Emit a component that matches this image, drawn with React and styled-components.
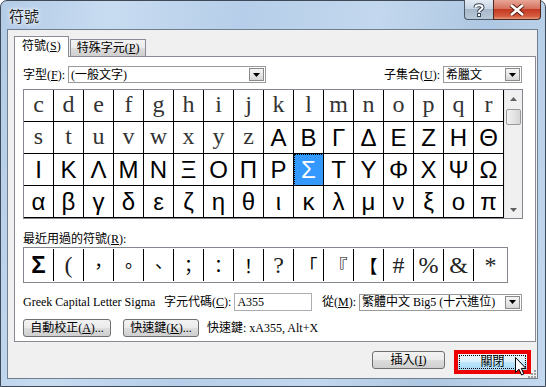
import React from "react";
import styled, { createGlobalStyle } from "styled-components";

const GlobalStyle = createGlobalStyle`
   html, body {
      margin: 0;
      padding: 0;
      background: #ffffff;
   }
   * {
      box-sizing: border-box;
   }
`;

const UI_FONT = `"Liberation Serif", "Noto Sans CJK TC", serif`;

const gridRows = [
   { chars: "cdefghijklmnopqr", font: "serif" },
   { chars: "stuvwxyz", font: "serif", rest: "ΑΒΓΔΕΖΗΘ" },
   { chars: "ΙΚΛΜΝΞΟΠΡΣΤΥΦΧΨΩ", font: "sans" },
   { chars: "αβγδεζηθικλμνξοπ", font: "sans" },
];

const recent = [
   { c: "Σ", font: "sans" },
   { c: "(", font: "serif" },
   { c: "，", font: "cjk" },
   { c: "。", font: "cjk" },
   { c: "、", font: "cjk" },
   { c: "；", font: "cjk" },
   { c: "：", font: "cjk" },
   { c: "！", font: "cjk" },
   { c: "?", font: "serif" },
   { c: "「", font: "cjk" },
   { c: "『", font: "cjk" },
   { c: "【", font: "cjk" },
   { c: "#", font: "serif" },
   { c: "%", font: "serif" },
   { c: "&", font: "serif" },
   { c: "*", font: "serif" },
];

const fontFor = (f) =>
   f === "serif"
      ? `"Liberation Serif", "DejaVu Serif", serif`
      : f === "cjk"
      ? `"Noto Sans CJK TC", sans-serif`
      : `"Liberation Sans", Arial, sans-serif`;

function ComboArrow() {
   return (
      <ArrowBox>
         <svg width="7" height="4" viewBox="0 0 7 4">
            <path d="M0 0 H7 L3.5 4 Z" fill="#000" />
         </svg>
      </ArrowBox>
   );
}

function Select({ width, children }) {
   return (
      <SelectBox $width={width}>
         <SelectText>{children}</SelectText>
         <ComboArrow />
      </SelectBox>
   );
}

function App() {
   const cells = [];
   gridRows.forEach((row, r) => {
      const all = row.chars + (row.rest || "");
      [...all].forEach((ch, i) => {
         const font = i < row.chars.length ? row.font : "sans";
         cells.push(
            <Cell
               key={`${r}-${i}`}
               $font={font}
               $selected={r === 2 && i === 9}
               $lastCol={i === 15}
            >
               {ch}
            </Cell>
         );
      });
   });

   return (
      <>
         <GlobalStyle />
         <Window>
            <TitleBar>
               <Title>符號</Title>
               <CaptionButtons>
                  <HelpButton>
                     <svg width="12" height="14" viewBox="0 0 12 14">
                        <path
                           d="M2.5 4.5 C2.5 1.5 9.5 1.5 9.5 4.5 C9.5 6.5 6 6.5 6 9"
                           fill="none"
                           stroke="#3a4656"
                           strokeWidth="4"
                        />
                        <path
                           d="M2.5 4.5 C2.5 1.5 9.5 1.5 9.5 4.5 C9.5 6.5 6 6.5 6 9"
                           fill="none"
                           stroke="#fff"
                           strokeWidth="2"
                        />
                        <rect x="4.5" y="10.5" width="3" height="3" fill="#fff" stroke="#3a4656" />
                     </svg>
                  </HelpButton>
                  <CloseButton>
                     <svg width="16" height="12" viewBox="0 0 16 12">
                        <path d="M2 1 L14 11 M14 1 L2 11" stroke="#5b1e12" strokeWidth="4.5" />
                        <path d="M2 1 L14 11 M14 1 L2 11" stroke="#fff" strokeWidth="2.5" />
                     </svg>
                  </CloseButton>
               </CaptionButtons>
            </TitleBar>

            <Client>
               <TabStrip>
                  <Tab $active>
                     符號(<u>S</u>)
                  </Tab>
                  <Tab>
                     特殊字元(<u>P</u>)
                  </Tab>
               </TabStrip>
               <Panel>
                  <Row $height={17}>
                     <Label>
                        字型(<u>F</u>):
                     </Label>
                     <Select width={198}>(一般文字)</Select>
                     <Spacer />
                     <Label>
                        子集合(<u>U</u>):
                     </Label>
                     <Select width={79}>希臘文</Select>
                  </Row>

                  <GridFrame>
                     <CharGrid>{cells}</CharGrid>
                     <ScrollBar>
                        <ScrollArrow>
                           <svg width="7" height="4" viewBox="0 0 7 4">
                              <path d="M0 4 H7 L3.5 0 Z" fill="#606060" />
                           </svg>
                        </ScrollArrow>
                        <Thumb />
                        <TrackFill />
                        <ScrollArrow>
                           <svg width="7" height="4" viewBox="0 0 7 4">
                              <path d="M0 0 H7 L3.5 4 Z" fill="#606060" />
                           </svg>
                        </ScrollArrow>
                     </ScrollBar>
                  </GridFrame>

                  <SectionLabel>
                     最近用過的符號(<u>R</u>):
                  </SectionLabel>
                  <RecentFrame>
                     {recent.map((r, i) => (
                        <RecentCell key={i} $font={r.font} $last={i === recent.length - 1}>
                           {r.c}
                        </RecentCell>
                     ))}
                  </RecentFrame>

                  <Row $height={18} $top={10}>
                     <Description>Greek Capital Letter Sigma</Description>
                     <Label>
                        字元代碼(<u>C</u>):
                     </Label>
                     <TextInput>A355</TextInput>
                     <Label $left={10}>
                        從(<u>M</u>):
                     </Label>
                     <Select width={164}>繁體中文 Big5 (十六進位)</Select>
                  </Row>

                  <Row $height={18} $top={8}>
                     <Button $width={88}>
                        自動校正(<u>A</u>)...
                     </Button>
                     <Button $width={76} $left={12}>
                        快速鍵(<u>K</u>)...
                     </Button>
                     <Label $left={8}>快速鍵: xA355, Alt+X</Label>
                  </Row>
               </Panel>

               <Footer>
                  <Button $width={73}>
                     插入(<u>I</u>)
                  </Button>
                  <Highlight>
                     <DefaultButton>
                        <FocusRect>關閉</FocusRect>
                     </DefaultButton>
                     <Pointer width="12" height="19" viewBox="0 0 12 19">
                        <path
                           d="M0.5 0.5 V15.5 L4 12.2 L6.6 18 L8.8 17 L6.3 11.4 H11 Z"
                           fill="#fff"
                           stroke="#000"
                        />
                     </Pointer>
                  </Highlight>
                  <Grip width="10" height="10" viewBox="0 0 10 10">
                     <g fill="#a0a0a0">
                        <rect x="8" y="2" width="2" height="2" />
                        <rect x="5" y="5" width="2" height="2" />
                        <rect x="8" y="5" width="2" height="2" />
                        <rect x="2" y="8" width="2" height="2" />
                        <rect x="5" y="8" width="2" height="2" />
                        <rect x="8" y="8" width="2" height="2" />
                     </g>
                  </Grip>
               </Footer>
            </Client>
         </Window>
      </>
   );
}

const Window = styled.div`
   width: 546px;
   height: 387px;
   display: flex;
   flex-direction: column;
   padding: 0 7px 7px 6px;
   border: 1px solid #3e4a58;
   border-radius: 7px 7px 0 0;
   background: linear-gradient(
      100deg,
      #b3cbe6 0%,
      #c8dcf1 18%,
      #b6cee9 40%,
      #c3d8ee 62%,
      #aec7e2 80%,
      #c4d9ef 100%
   );
   font-family: ${UI_FONT};
   font-size: 12px;
   color: #000;
`;

const TitleBar = styled.div`
   height: 28px;
   display: flex;
   align-items: flex-start;
`;

const Title = styled.div`
   margin: 6px 0 0 2px;
   font-family: "Noto Sans CJK TC", sans-serif;
   font-size: 15px;
   line-height: 17px;
   color: #1e1e1e;
   text-shadow: 0 0 6px #ffffff, 0 0 3px #ffffff;
`;

const CaptionButtons = styled.div`
   margin-left: auto;
   margin-right: -3px;
   margin-top: -1px;
   display: flex;
`;

const HelpButton = styled.div`
   width: 29px;
   height: 20px;
   display: flex;
   align-items: center;
   justify-content: center;
   border: 1px solid #4b5969;
   border-top: none;
   border-right: none;
   border-radius: 0 0 0 4px;
   background: linear-gradient(#e3ebf4 0%, #c7d4e2 45%, #a8b8ca 50%, #b8c8d8 100%);
`;

const CloseButton = styled.div`
   width: 48px;
   height: 20px;
   display: flex;
   align-items: center;
   justify-content: center;
   border: 1px solid #4b2a24;
   border-top: none;
   border-radius: 0 0 4px 0;
   background: linear-gradient(#e8a696 0%, #d4725f 45%, #c43a22 50%, #d45a3e 85%, #e69b7c 100%);
`;

const Client = styled.div`
   flex: 1;
   display: flex;
   flex-direction: column;
   border: 1px solid #6f7f92;
   background: #f0f0f0;
   padding: 6px 1px 0 6px;
`;

const TabStrip = styled.div`
   height: 21px;
   display: flex;
   align-items: flex-end;
   position: relative;
   z-index: 1;
`;

const Tab = styled.div`
   height: ${(p) => (p.$active ? "21px" : "18px")};
   padding: ${(p) => (p.$active ? "2px 7px 0 7px" : "1px 6px 0 6px")};
   margin-right: ${(p) => (p.$active ? "1px" : "0")};
   border: 1px solid #898c95;
   border-bottom: ${(p) => (p.$active ? "none" : "1px solid #898c95")};
   background: ${(p) =>
      p.$active ? "#ffffff" : "linear-gradient(#f3f3f3 0%, #ebebeb 50%, #dddddd 51%, #cfcfcf 100%)"};
   line-height: 15px;
   white-space: nowrap;
`;

const Panel = styled.div`
   height: 286px;
   margin-top: -1px;
   border: 1px solid #898c95;
   background: #ffffff;
   padding: 9px 13px 0 8px;
   display: flex;
   flex-direction: column;
`;

const Row = styled.div`
   height: ${(p) => p.$height}px;
   margin-top: ${(p) => p.$top || 0}px;
   display: flex;
   align-items: center;
   white-space: nowrap;
`;

const Spacer = styled.div`
   flex: 1;
`;

const Label = styled.span`
   margin-left: ${(p) => p.$left || 0}px;
   margin-right: 3px;
   line-height: 14px;
`;

const Description = styled.span`
   width: 142px;
   line-height: 14px;
`;

const SelectBox = styled.div`
   width: ${(p) => p.$width}px;
   height: 17px;
   display: flex;
   align-items: center;
   border: 1px solid #9a9a9a;
   background: #fff;
   padding: 0 1px 0 2px;
`;

const SelectText = styled.span`
   flex: 1;
   overflow: hidden;
   line-height: 14px;
`;

const ArrowBox = styled.div`
   width: 15px;
   height: 13px;
   display: flex;
   align-items: center;
   justify-content: center;
   border: 1px solid #8a8a8a;
   background: linear-gradient(#f4f4f4 0%, #e8e8e8 50%, #d6d6d6 100%);
`;

const GridFrame = styled.div`
   width: 500px;
   margin-top: 6px;
   display: flex;
   border: 1px solid #828790;
`;

const CharGrid = styled.div`
   display: grid;
   grid-template-columns: repeat(16, 30px);
   grid-auto-rows: 32px;
`;

const Cell = styled.div`
   display: flex;
   align-items: center;
   justify-content: center;
   border-right: 1px solid #000;
   border-bottom: 1px solid #000;
   font-family: ${(p) => fontFor(p.$font)};
   font-size: 24px;
   line-height: 1;
   padding-bottom: ${(p) => (p.$font === "serif" ? "3px" : "0")};
   color: ${(p) => (p.$selected ? "#fff" : p.$font === "serif" ? "#333" : "#000")};
   background: ${(p) => (p.$selected ? "#3399ff" : "#fff")};
   outline: ${(p) => (p.$selected ? "1px dotted #000" : "none")};
   outline-offset: -1px;
`;

const ScrollBar = styled.div`
   width: 18px;
   display: flex;
   flex-direction: column;
   background: #f0f0f0;
   border-left: 1px solid #e6e6e6;
`;

const ScrollArrow = styled.div`
   height: 17px;
   display: flex;
   align-items: center;
   justify-content: center;
`;

const Thumb = styled.div`
   height: 16px;
   margin: 2px 1px 0 1px;
   border: 1px solid #999;
   border-radius: 2px;
   background: linear-gradient(90deg, #f2f2f2 0%, #e4e4e4 50%, #d6d6d6 100%);
`;

const TrackFill = styled.div`
   flex: 1;
`;

const SectionLabel = styled.div`
   margin-top: 13px;
   height: 15px;
   line-height: 14px;
`;

const RecentFrame = styled.div`
   width: 485px;
   height: 36px;
   display: flex;
   border: 1px solid #828790;
`;

const RecentCell = styled.div`
   width: ${(p) => (p.$last ? "33px" : "30px")};
   display: flex;
   align-items: center;
   justify-content: center;
   border-right: ${(p) => (p.$last ? "none" : "1px solid #000")};
   margin: 1px 0;
   font-family: ${(p) => fontFor(p.$font)};
   font-size: ${(p) => (p.$font === "cjk" ? "18px" : "24px")};
   font-weight: ${(p) => (p.$font === "sans" ? "bold" : "normal")};
   line-height: 1;
   color: ${(p) => (p.$font === "serif" ? "#222" : "#000")};
`;

const TextInput = styled.div`
   width: 78px;
   height: 18px;
   border: 1px solid #abadb3;
   background: #fff;
   padding: 1px 2px;
   line-height: 14px;
`;

const Button = styled.div`
   width: ${(p) => p.$width}px;
   height: 18px;
   margin-left: ${(p) => p.$left || 0}px;
   display: flex;
   align-items: center;
   justify-content: center;
   border: 1px solid #707070;
   border-radius: 3px;
   background: linear-gradient(#f2f2f2 0%, #ebebeb 50%, #dddddd 51%, #cfcfcf 100%);
   line-height: 14px;
   white-space: nowrap;
`;

const Footer = styled.div`
   flex: 1;
   display: flex;
   align-items: center;
   justify-content: flex-end;
   padding-right: 5px;
   position: relative;
`;

const Highlight = styled.div`
   position: relative;
   width: 77px;
   height: 24px;
   margin-left: 9px;
   margin-top: 3px;
   border: 4px solid #ee0000;
   background: #3c7fb1;
`;

const DefaultButton = styled.div`
   height: 100%;
   padding: 1px;
   background: linear-gradient(#eaf6fd 0%, #d9f0fc 50%, #bee6fd 51%, #a7d9f5 100%);
`;

const FocusRect = styled.div`
   height: 100%;
   display: flex;
   align-items: center;
   justify-content: center;
   outline: 1px dotted #000;
   outline-offset: -1px;
   line-height: 14px;
`;

const Pointer = styled.svg`
   position: absolute;
   left: 57px;
   top: 3px;
`;

const Grip = styled.svg`
   position: absolute;
   right: 0;
   bottom: 0;
`;

export default App;
